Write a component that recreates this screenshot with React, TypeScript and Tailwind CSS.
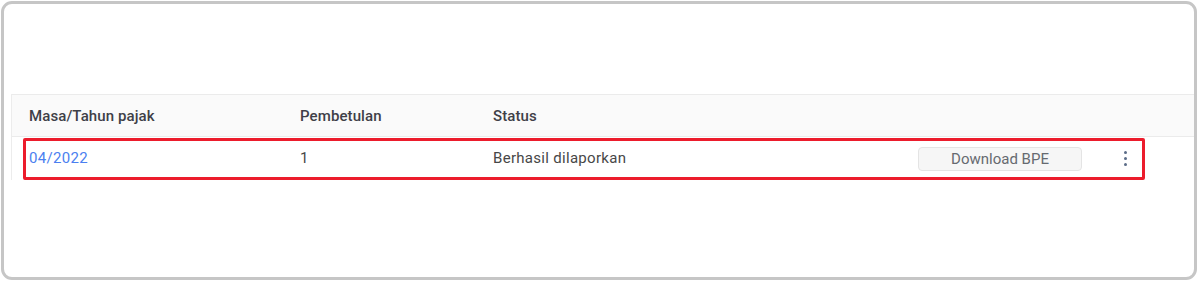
import { useState } from "react";

type Row = { masa: string; pembetulan: string; status: string };

const rows: Row[] = [{ masa: "04/2022", pembetulan: "1", status: "Berhasil dilaporkan" }];

function Kebab() {
  return (
    <div className="flex h-6 w-6 flex-col items-center justify-center gap-[3px]">
      <span className="block h-[3px] w-[3px] rounded-full bg-[#5b6c88]" />
      <span className="block h-[3px] w-[3px] rounded-full bg-[#5b6c88]" />
      <span className="block h-[3px] w-[3px] rounded-full bg-[#5b6c88]" />
    </div>
  );
}

export default function App() {
  const [selected] = useState(0);

  return (
    <div className="h-[282px] w-[1200px] bg-white pl-px pt-px font-['Roboto',sans-serif]">
      <div className="h-[279px] w-[1196px] rounded-[11px] border-[3px] border-[#c6c6c6] pl-[7px] pt-[90px]">
        <div className="border-l border-[#ececec]">
          <div className="grid h-[43px] grid-cols-[271px_193px_1fr] items-center border-y border-[#ebebeb] bg-[#fafafa] pt-px text-[15px] font-medium tracking-[0.1px] text-[#3f3f48]">
            <div className="pl-[17px]">Masa/Tahun pajak</div>
            <div className="pl-[17px]">Pembetulan</div>
            <div className="pl-[17px]">Status</div>
          </div>
          {rows.map((r, i) => (
            <div key={r.masa} className="relative grid h-[43px] grid-cols-[271px_193px_1fr] items-center text-[15px] tracking-[0.3px] text-[#474747]">
              <div className="pl-[17px] text-[#4b7ff0]">{r.masa}</div>
              <div className="pl-[17px]">{r.pembetulan}</div>
              <div className="flex items-center pl-[17px]">
                <span className="flex-1">{r.status}</span>
                <button
                  type="button"
                  className="h-[24px] w-[164px] rounded-[4px] border border-[#e4e4e4] bg-[#f6f6f6] text-[15px] tracking-normal text-[#666a70]"
                >
                  Download BPE
                </button>
                <div className="ml-[31px] mr-[57px]">
                  <Kebab />
                </div>
              </div>
              {i === selected && (
                <div className="pointer-events-none absolute left-[11px] top-px h-[42px] w-[1122px] rounded-[2px] border-[3px] border-[#ec1c2c]" />
              )}
            </div>
          ))}
        </div>
      </div>
    </div>
  );
}
